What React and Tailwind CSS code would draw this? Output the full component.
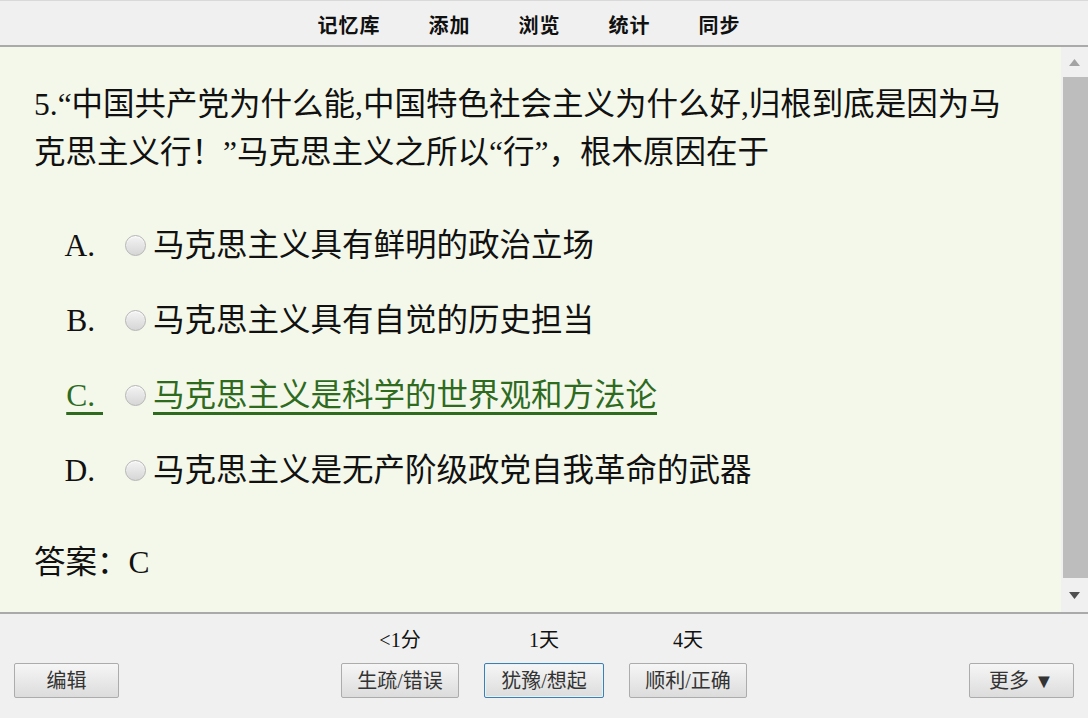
import React from 'react';

const FONT = "font-['Liberation_Serif','Noto_Sans_CJK_SC',serif]";

const OPTIONS = [
  { key: 'A', text: '马克思主义具有鲜明的政治立场' },
  { key: 'B', text: '马克思主义具有自觉的历史担当' },
  { key: 'C', text: '马克思主义是科学的世界观和方法论', correct: true },
  { key: 'D', text: '马克思主义是无产阶级政党自我革命的武器' },
];

const NAV = ['记忆库', '添加', '浏览', '统计', '同步'];

const Radio = () => (
  <span className="inline-block w-[21px] h-[21px] rounded-full border border-[#b5b5b5] bg-gradient-to-b from-[#f4f4f4] to-[#d6d6d6] shadow-[inset_0_1px_1px_rgba(255,255,255,0.8)]" />
);

const Btn = ({ label, w, focused }) => (
  <button
    className={`h-[35px] ${w} rounded-[2px] border text-[20px] text-[#333] bg-gradient-to-b from-[#f6f6f6] to-[#dcdcdc] ${
      focused ? 'border-[#3c7fb1] shadow-[inset_0_0_0_1px_#e8f2fb]' : 'border-[#acacac]'
    }`}
  >
    {label}
  </button>
);

const Answer = ({ interval, label, w, focused }) => (
  <div className="flex flex-col items-center">
    <div className="h-[24px] text-[20px] leading-[24px] text-[#111]">{interval}</div>
    <div className="mt-[11px]">
      <Btn label={label} w={w} focused={focused} />
    </div>
  </div>
);

export default function App() {
  return (
    <div className={`w-[1088px] h-[718px] flex flex-col bg-[#f0f0f0] overflow-hidden ${FONT}`}>
      {/* top toolbar */}
      <div className="h-[47px] shrink-0 border-t border-[#d9d9d9] border-b-2 border-b-[#aaaaaa] flex items-center justify-center gap-[48px] pt-[5px] pr-[30px]">
        {NAV.map((n) => (
          <span key={n} className="text-[20px] font-bold text-[#111] leading-none tracking-[1px]">{n}</span>
        ))}
      </div>

      {/* card area */}
      <div className="flex-1 flex min-h-0 border-b-2 border-b-[#aaaaaa]">
        <div className="flex-1 bg-[#f4f8ea] pl-[34px] pr-[30px] pt-[34px] text-[31.5px] leading-[48px] text-[#111]">
          <div>
            5.“中国共产党为什么能,中国特色社会主义为什么好,归根到底是因为马克思主义行！”马克思主义之所以“行”，根木原因在于
          </div>

          <div className="mt-[31px] flex flex-col">
            {OPTIONS.map((o) => (
              <div key={o.key} className="h-[75px] flex items-center">
                <span
                  className={`w-[69px] text-right whitespace-pre ${
                    o.correct ? 'text-[#2e6b1f] underline decoration-[3px] underline-offset-[6px] decoration-[#2e6b1f]' : ''
                  }`}
                >
                  {o.key + '.\u00a0'}
                </span>
                <span className="ml-[22px] flex items-center">
                  <Radio />
                </span>
                <span
                  className={`ml-[7px] ${
                    o.correct ? 'text-[#2e6b1f] underline decoration-[3px] underline-offset-[6px] decoration-[#2e6b1f]' : ''
                  }`}
                >
                  {o.text}
                </span>
              </div>
            ))}
          </div>

          <div className="mt-[31px]">答案：C</div>
        </div>

        {/* scrollbar */}
        <div className="w-[27px] shrink-0 bg-[#f0f0f0] flex flex-col">
          <div className="h-[30px] flex items-center justify-center">
            <svg width="11" height="7" viewBox="0 0 11 7"><path d="M5.5 0L11 7H0z" fill="#a3a3a3" /></svg>
          </div>
          <div className="flex-1 ml-[2px] bg-[#bdbdbd]" />
          <div className="h-[34px] flex items-center justify-center">
            <svg width="11" height="7" viewBox="0 0 11 7"><path d="M0 0H11L5.5 7z" fill="#505050" /></svg>
          </div>
        </div>
      </div>

      {/* bottom bar */}
      <div className="h-[104px] shrink-0 grid grid-cols-[1fr_auto_1fr] items-start pt-[14px]">
        <div className="pl-[14px] pt-[35px]">
          <Btn label="编辑" w="w-[105px]" />
        </div>
        <div className="flex gap-[25px]">
          <Answer interval="<1分" label="生疏/错误" w="w-[118px]" />
          <Answer interval="1天" label="犹豫/想起" w="w-[120px]" focused />
          <Answer interval="4天" label="顺利/正确" w="w-[118px]" />
        </div>
        <div className="pr-[14px] pt-[35px] flex justify-end">
          <Btn label="更多 ▼" w="w-[105px]" />
        </div>
      </div>
    </div>
  );
}
